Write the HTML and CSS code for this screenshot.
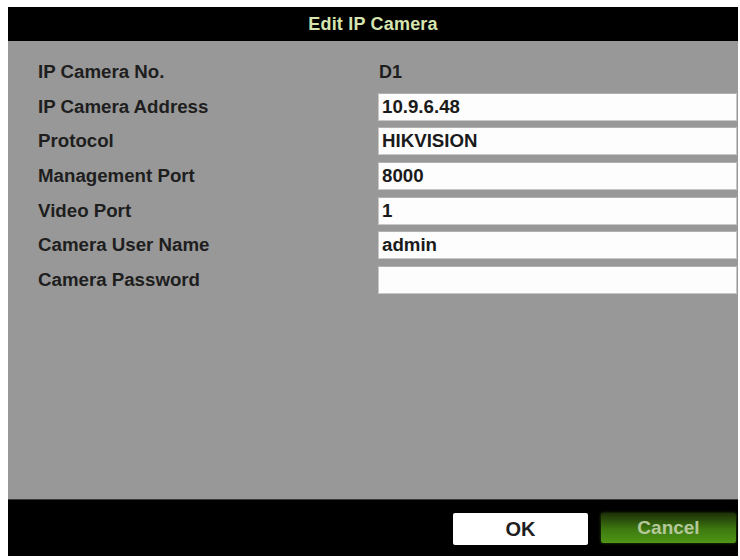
FILE: index.html
```html
<!DOCTYPE html>
<html>
<head>
<meta charset="utf-8">
<link rel="stylesheet" href="styles.css">
</head>
<body>
<div class="dialog">
  <div class="titlebar">Edit IP Camera</div>
  <div class="body">
    <div class="row"><div class="label">IP Camera No.</div><div class="value">D1</div></div>
    <div class="row"><div class="label">IP Camera Address</div><div class="field">10.9.6.48</div></div>
    <div class="row"><div class="label">Protocol</div><div class="field">HIKVISION</div></div>
    <div class="row"><div class="label">Management Port</div><div class="field">8000</div></div>
    <div class="row"><div class="label">Video Port</div><div class="field">1</div></div>
    <div class="row"><div class="label">Camera User Name</div><div class="field">admin</div></div>
    <div class="row"><div class="label">Camera Password</div><div class="field"></div></div>
  </div>
  <div class="footer">
    <div class="btn ok">OK</div>
    <div class="btn cancel">Cancel</div>
  </div>
</div>
</body>
</html>
```
FILE: styles.css
```css
html, body {
  margin: 0;
  padding: 0;
  background: #ffffff;
}
body {
  font-family: "Liberation Sans", Arial, sans-serif;
  font-weight: bold;
}
.dialog {
  margin: 7px 2px 0 8px;
  width: 730px;
  display: flex;
  flex-direction: column;
}
.titlebar {
  height: 34px;
  background: #000;
  color: #d6e4ae;
  font-size: 18px;
  display: flex;
  align-items: center;
  justify-content: center;
  letter-spacing: 0.2px;
}
.body {
  height: 441px;
  background: #989898;
  padding: 17px 1px 0 30px;
  display: flex;
  flex-direction: column;
  gap: 6.7px;
}
.row {
  height: 28px;
  display: grid;
  grid-template-columns: 340px 1fr;
  align-items: center;
}
.label {
  font-size: 18.7px;
  color: #1e1e1e;
}
.value {
  font-size: 18px;
  color: #1e1e1e;
  padding-left: 1px;
}
.field {
  height: 28px;
  box-sizing: border-box;
  background: #fdfdfd;
  border: 1px solid #c8c8c8;
  border-top-color: #b0b0b0;
  font-size: 18.7px;
  color: #1a1a1a;
  padding-left: 3px;
  display: flex;
  align-items: center;
}
.footer {
  height: 57px;
  background: #000;
  border-top: 1px solid #3a3a3a;
  box-sizing: border-box;
  display: flex;
  justify-content: flex-end;
  align-items: flex-start;
  padding: 13px 2px 0 0;
  gap: 13px;
}
.btn {
  width: 135px;
  height: 32px;
  display: flex;
  align-items: center;
  justify-content: center;
  font-size: 19px;
  border-radius: 2px;
}
.ok {
  background: #ffffff;
  color: #1e1e1e;
  font-size: 20px;
}
.cancel {
  height: 30px;
  background: linear-gradient(#1e3008 0%, #3e7a10 55%, #4f9616 100%);
  color: #b4c89c;
  box-shadow: 0 0 3px #2c5a0a;
}
```
